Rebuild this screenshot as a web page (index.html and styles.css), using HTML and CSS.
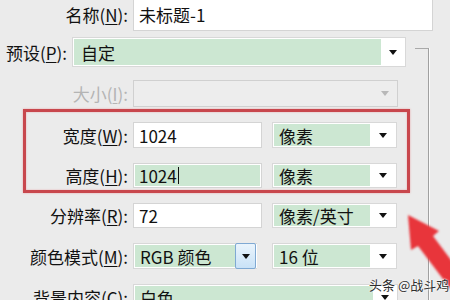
FILE: index.html
```html
<!DOCTYPE html>
<html lang="zh-CN">
<head>
    <meta charset="UTF-8">
    <title>新建文档</title>
    <link rel="stylesheet" href="styles.css">
</head>
<body>
    <div class="dialog">
        <div class="form">
            <div class="row row-name">
                <label class="label">名称(<u>N</u>):</label>
                <div class="input input-name">未标题-1</div>
            </div>

            <div class="row row-preset">
                <label class="label label-preset">预设(<u>P</u>):</label>
                <div class="select select-preset">
                    <div class="value">自定</div>
                    <div class="btn"><span class="arrow"></span></div>
                </div>
            </div>

            <div class="row row-size">
                <label class="label label-disabled">大小(<u>I</u>):</label>
                <div class="select select-disabled">
                    <div class="value"></div>
                    <div class="btn"><span class="arrow"></span></div>
                </div>
            </div>

            <div class="highlight">
                <div class="row row-width">
                    <label class="label">宽度(<u>W</u>):</label>
                    <div class="input input-num">1024</div>
                    <div class="select select-unit">
                        <div class="value">像素</div>
                        <div class="btn"><span class="arrow"></span></div>
                    </div>
                </div>
                <div class="row row-height">
                    <label class="label">高度(<u>H</u>):</label>
                    <div class="input input-num input-focus">1024<span class="caret"></span></div>
                    <div class="select select-unit">
                        <div class="value">像素</div>
                        <div class="btn"><span class="arrow"></span></div>
                    </div>
                </div>
            </div>

            <div class="row row-res">
                <label class="label">分辨率(<u>R</u>):</label>
                <div class="input input-num">72</div>
                <div class="select select-unit">
                    <div class="value">像素/英寸</div>
                    <div class="btn"><span class="arrow"></span></div>
                </div>
            </div>

            <div class="row row-mode">
                <label class="label">颜色模式(<u>M</u>):</label>
                <div class="select select-mode">
                    <div class="value">RGB 颜色</div>
                    <div class="btn btn-hot"><span class="arrow"></span></div>
                </div>
                <div class="select select-unit">
                    <div class="value">16 位</div>
                    <div class="btn"><span class="arrow"></span></div>
                </div>
            </div>

            <div class="row row-bg">
                <label class="label">背景内容(<u>C</u>):</label>
                <div class="select select-bg">
                    <div class="value">白色</div>
                    <div class="btn"><span class="arrow"></span></div>
                </div>
            </div>
        </div>

        <div class="groupbox"></div>

        <svg class="pointer" width="450" height="300" viewBox="0 0 450 300">
            <defs>
                <filter id="soft"><feGaussianBlur stdDeviation="1.2"/></filter>
            </defs>
            <polygon points="408,215 439,231 433,236 496,320 474,320 418,246 411,250" fill="#e8343a" filter="url(#soft)"/>
        </svg>

        <div class="watermark">头条 @战斗鸡</div>
    </div>
</body>
</html>
```

FILE: styles.css
```css
body {
    margin: 0;
    background-color: #ebebeb;
}
.dialog {
    position: relative;
    width: 450px;
    height: 300px;
    overflow: hidden;
    background-color: #ebebeb;
    font-family: "Noto Sans CJK SC", sans-serif;
    font-size: 17px;
    color: #111;
}
.form {
    display: flex;
    flex-direction: column;
}
.row {
    display: flex;
    align-items: stretch;
}
.label {
    width: 128px;
    margin-right: 5px;
    text-align: right;
    white-space: nowrap;
    display: flex;
    align-items: center;
    justify-content: flex-end;
}
.label u {
    text-decoration-thickness: 1px;
    text-underline-offset: 2px;
}
.label-disabled {
    color: #b4b4b4;
}
.label-preset {
    width: 67px;
}

/* text fields */
.input {
    box-sizing: border-box;
    background-color: #fff;
    border: 1px solid #d4d4d4;
    padding-left: 5px;
    display: flex;
    align-items: center;
}
.input-name {
    width: 300px;
}
.input-num {
    width: 129px;
    margin-right: 10px;
}
.input-focus {
    background-color: #cce7d2;
    box-shadow: inset 0 0 0 1px #fff;
}
.caret {
    display: inline-block;
    width: 1px;
    height: 17px;
    margin-left: 1px;
    background-color: #111;
}

/* drop-downs */
.select {
    box-sizing: border-box;
    display: flex;
    background-color: #fff;
    border: 1px solid #d8d8d8;
    padding: 1px;
}
.select .value {
    flex: 1;
    background-color: #cce7d2;
    padding-left: 5px;
    display: flex;
    align-items: center;
    white-space: nowrap;
}
.select .btn {
    width: 23px;
    display: flex;
    align-items: center;
    justify-content: center;
}
.arrow {
    width: 0;
    height: 0;
    border-left: 4px solid transparent;
    border-right: 4px solid transparent;
    border-top: 5px solid #111;
}
.select-preset {
    width: 334px;
}
.select-preset .value {
    padding-left: 7px;
}
.select-disabled {
    width: 265px;
    background-color: #ededed;
    border-color: #d0d0d0;
}
.select-disabled .value {
    background-color: transparent;
}
.select-disabled .arrow {
    border-top-color: #b8b8b8;
}
.select-unit {
    width: 125px;
}
.select-unit .btn {
    width: 25px;
}
.select-mode {
    width: 124px;
    border-right: none;
}
.btn-hot {
    box-sizing: border-box;
    margin: -2px 0 -2px 0;
    border: 1px solid #7fa9d3;
    border-radius: 2px;
    background: linear-gradient(#eaf4fc, #c9e2f7);
}
.select-mode .btn {
    width: 21px;
}
.select-bg {
    width: 265px;
}

/* row placement */
.row-name {
    height: 33px;
    margin-top: -2px;
}
.row-preset {
    height: 30px;
    margin-top: 6px;
}
.row-size {
    height: 27px;
    margin-top: 13px;
}
.highlight {
    margin: 2px 0 0 23px;
    width: 387px;
    box-sizing: border-box;
    border: 3px solid #c8474d;
    box-shadow: 0 0 2px #e9a7aa, inset 0 0 2px #e9a7aa;
    padding: 10px 0 2px;
}
.highlight .label {
    width: 102px;
}
.row-width {
    height: 26px;
}
.row-height {
    height: 25px;
    margin-top: 15px;
}
.row-res {
    height: 25px;
    margin-top: 10px;
}
.row-mode {
    height: 26px;
    margin-top: 15px;
}
.row-mode .select-mode {
    margin-right: 15px;
}
.row-bg {
    height: 26px;
    margin-top: 15px;
}

/* overlays */
.groupbox {
    position: absolute;
    left: 415px;
    top: 48px;
    width: 13px;
    height: 270px;
    border-top: 1px solid #a9a9a9;
    border-right: 1px solid #a0a0a0;
    box-shadow: 1px 0 0 #fafafa;
}
.pointer {
    position: absolute;
    left: 0;
    top: 0;
}
.watermark {
    position: absolute;
    left: 369px;
    top: 275px;
    font-size: 13px;
    color: #2e2e2e;
    text-shadow: 0 0 2px #fff, 0 0 2px #fff;
    white-space: nowrap;
}
```
